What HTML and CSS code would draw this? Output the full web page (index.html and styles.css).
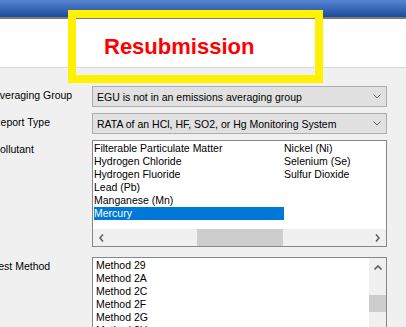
FILE: index.html
```html
<!DOCTYPE html>
<html lang="en">
<head>
    <meta charset="UTF-8">
    <meta name="viewport" content="width=device-width, initial-scale=1.0">
    <title>Resubmission</title>
    <link rel="stylesheet" href="styles.css">
</head>
<body>
    <div class="titlebar"></div>

    <header class="banner">
        <h1 class="banner-title">Resubmission</h1>
    </header>
    <div class="callout"></div>

    <main class="form">
        <label class="field-label">Averaging Group</label>
        <div class="combo">
            <span>EGU is not in an emissions averaging group</span>
            <svg width="8" height="5" viewBox="0 0 8 5"><path d="M0.5 0.5 L4 4 L7.5 0.5" fill="none" stroke="#606060"/></svg>
        </div>

        <label class="field-label">Report Type</label>
        <div class="combo">
            <span>RATA of an HCl, HF, SO2, or Hg Monitoring System</span>
            <svg width="8" height="5" viewBox="0 0 8 5"><path d="M0.5 0.5 L4 4 L7.5 0.5" fill="none" stroke="#606060"/></svg>
        </div>

        <label class="field-label">Pollutant</label>
        <div class="listbox pollutants">
            <div class="columns">
                <div class="item">Filterable Particulate Matter</div>
                <div class="item">Hydrogen Chloride</div>
                <div class="item">Hydrogen Fluoride</div>
                <div class="item">Lead (Pb)</div>
                <div class="item">Manganese (Mn)</div>
                <div class="item selected">Mercury</div>
                <div class="item">Nickel (Ni)</div>
                <div class="item">Selenium (Se)</div>
                <div class="item">Sulfur Dioxide</div>
            </div>
            <div class="hscroll">
                <div class="arrow-btn">
                    <svg width="5" height="8" viewBox="0 0 5 8"><path d="M4 0.5 L1 4 L4 7.5" fill="none" stroke="#606060" stroke-width="1.6"/></svg>
                </div>
                <div class="track"><div class="hthumb"></div></div>
                <div class="arrow-btn">
                    <svg width="5" height="8" viewBox="0 0 5 8"><path d="M1 0.5 L4 4 L1 7.5" fill="none" stroke="#606060" stroke-width="1.6"/></svg>
                </div>
            </div>
        </div>

        <label class="field-label test-label">Test Method</label>
        <div class="listbox methods">
            <div class="method-items">
                <div class="item">Method 29</div>
                <div class="item">Method 2A</div>
                <div class="item">Method 2C</div>
                <div class="item">Method 2F</div>
                <div class="item">Method 2G</div>
                <div class="item">Method 2H</div>
                <div class="item">Method 3</div>
            </div>
            <div class="vscroll">
                <div class="arrow-btn up">
                    <svg width="8" height="5" viewBox="0 0 8 5"><path d="M0.5 4.5 L4 1 L7.5 4.5" fill="none" stroke="#606060" stroke-width="1.6"/></svg>
                </div>
                <div class="vthumb"></div>
            </div>
        </div>
    </main>
</body>
</html>
```

FILE: styles.css
```css
body {
    margin: 0;
    background-color: #f0f0f0;
    font-family: "Liberation Sans", Arial, sans-serif;
    font-size: 10.5px;
    color: #000;
    overflow: hidden;
    position: relative;
    height: 327px;
}

.titlebar {
    height: 17px;
    background: linear-gradient(#5686d2, #1b4b9d);
    border-bottom: 2px solid #7b7b7b;
}

.banner {
    background-color: #fff;
    height: 48px;
    border-bottom: 1px solid #d9d9d9;
}

.banner-title {
    margin: 0;
    padding: 15px 0 0 104px;
    font-size: 22px;
    line-height: 25px;
    font-weight: bold;
    color: #ff0000;
}

/* yellow annotation frame drawn over the banner */
.callout {
    position: absolute;
    left: 68px;
    top: 10px;
    width: 239px;
    height: 57px;
    border: 8px solid #fff200;
}

.form {
    display: grid;
    grid-template-columns: 99px 295px;
    row-gap: 6px;
    margin: 18px 0 0 -7px;
}

.field-label {
    padding-top: 3px;
    line-height: 13px;
    white-space: nowrap;
}

.combo {
    height: 21px;
    box-sizing: border-box;
    border: 1px solid #adadad;
    background-color: #e1e1e1;
    display: flex;
    align-items: center;
    justify-content: space-between;
    padding: 0 5px 0 4px;
    white-space: nowrap;
}

.listbox {
    box-sizing: border-box;
    border: 1px solid #828790;
    background-color: #fff;
    display: flex;
}

.item {
    line-height: 13px;
    white-space: nowrap;
}

.pollutants {
    height: 107px;
    flex-direction: column;
}

.columns {
    display: grid;
    grid-auto-flow: column;
    grid-template-rows: repeat(6, 13px);
    grid-auto-columns: 190px;
    padding: 1px 0 0 1px;
}

.item.selected {
    background-color: #0078d7;
    color: #fff;
}

.hscroll {
    margin-top: auto;
    height: 17px;
    display: flex;
    background-color: #f0f0f0;
}

.arrow-btn {
    width: 17px;
    height: 17px;
    display: flex;
    align-items: center;
    justify-content: center;
}

.track {
    flex: 1;
}

.hthumb {
    margin-left: 87px;
    width: 86px;
    height: 100%;
    background-color: #cdcdcd;
}

.test-label {
    margin-top: 4px;
}

.methods {
    margin-top: 4px;
    height: 100px;
}

.method-items {
    flex: 1;
    padding: 1px 0 0 3px;
}

.vscroll {
    width: 17px;
    background-color: #f0f0f0;
}

.vscroll .arrow-btn {
    height: 19px;
}

.vthumb {
    margin-top: 18px;
    height: 17px;
    background-color: #cdcdcd;
}
```
